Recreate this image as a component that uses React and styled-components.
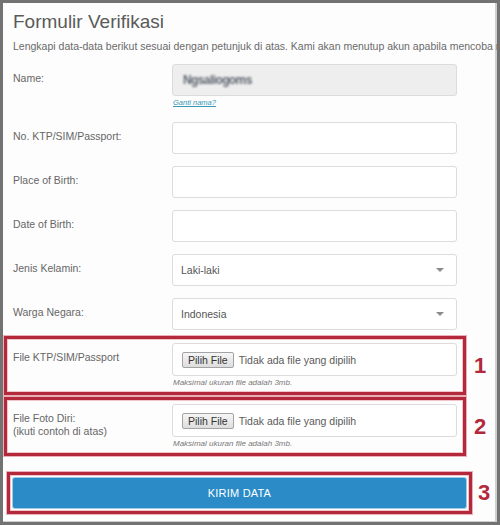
import React from "react";
import styled, { createGlobalStyle } from "styled-components";

const Global = createGlobalStyle`
  html, body { margin: 0; padding: 0; background: #fff; }
  * { box-sizing: border-box; }
`;

const RED = "#b3283b";

const Frame = styled.div`
  width: 500px;
  height: 525px;
  border: 3px solid #727272;
  background: #fdfdfd;
  overflow: hidden;
  font-family: "Liberation Sans", Arial, sans-serif;
  color: #555;
  box-shadow: inset -2px -1px 0 #cfcfcf;
`;

const Title = styled.h1`
  margin: 7px 0 0 10px;
  font-size: 19px;
  line-height: 24px;
  font-weight: 400;
  color: #5a5a5a;
`;

const Subtitle = styled.p`
  margin: 5px 0 0 10px;
  font-size: 10.5px;
  line-height: 14px;
  white-space: nowrap;
  color: #6a6a6a;
`;

const Row = styled.div`
  display: flex;
  align-items: flex-start;
  padding-left: 10px;
  margin-top: ${(p) => p.$mt ?? 12}px;
`;

const Label = styled.div`
  width: 159px;
  flex: none;
  padding-top: 8px;
  font-size: 10.5px;
  line-height: 13px;
  color: #666;
`;

const Field = styled.div`
  width: 285px;
  flex: none;
  display: flex;
  flex-direction: column;
`;

const Control = styled.div`
  height: ${(p) => p.$h ?? 32}px;
  border: 1px solid #dcdcdc;
  border-radius: 3px;
  background: ${(p) => (p.$disabled ? "#eeeeee" : "#fff")};
  display: flex;
  align-items: center;
  justify-content: space-between;
  padding: 0 12px 0 8px;
  font-size: 10.5px;
  color: #555;
`;

const Blurred = styled.span`
  font-weight: 700;
  font-size: 12px;
  color: #5f6670;
  letter-spacing: -0.6px;
  filter: blur(1px);
  margin-left: 2px;
`;

const Caret = styled.span`
  width: 0;
  height: 0;
  border-left: 4px solid transparent;
  border-right: 4px solid transparent;
  border-top: 4px solid #8a8a8a;
`;

const Link = styled.a`
  margin: 1px 0 0 1px;
  font-size: 7.5px;
  line-height: 11px;
  font-style: italic;
  color: #3a98b9;
  text-decoration: underline;
`;

const Help = styled.div`
  margin: 2px 0 0 1px;
  font-size: 8px;
  line-height: 10px;
  font-style: italic;
  color: #777;
`;

const Annot = styled.div`
  display: flex;
  align-items: center;
  margin-top: ${(p) => p.$mt}px;
  margin-left: ${(p) => p.$ml}px;
`;

const RedBox = styled.div`
  width: ${(p) => p.$w}px;
  border: 3px solid ${RED};
  box-shadow: 0 0 0 1px #eab0b8, inset 0 0 0 1px #f1c4ca;
  padding: ${(p) => p.$pad};
  display: flex;
  align-items: flex-start;
`;

const Num = styled.span`
  margin-left: ${(p) => p.$ml}px;
  font-size: 22px;
  line-height: 24px;
  font-weight: 700;
  color: ${RED};
`;

const FileButton = styled.span`
  height: 16px;
  padding: 0 5px;
  display: inline-flex;
  align-items: center;
  border: 1px solid #a3a3a3;
  border-radius: 2px;
  background: linear-gradient(#f6f6f6, #dddddd);
  font-size: 10.5px;
  color: #333;
`;

const FileText = styled.span`
  margin-left: 5px;
  font-size: 10.5px;
  color: #5a5a5a;
`;

const FileControl = styled(Control)`
  justify-content: flex-start;
  padding-left: 9px;
`;

const Submit = styled.button`
  width: 453px;
  height: 30px;
  border: none;
  border-radius: 2px;
  background: #2a8bc7;
  box-shadow: 0 0 0 1px #9fcbe6;
  color: #fff;
  font-family: "Liberation Sans", Arial, sans-serif;
  font-size: 11px;
  letter-spacing: 0.2px;
  text-transform: uppercase;
`;

const FileRow = ({ label }) => (
  <>
    <Label>{label}</Label>
    <Field>
      <FileControl $h={33}>
        <FileButton>Pilih File</FileButton>
        <FileText>Tidak ada file yang dipilih</FileText>
      </FileControl>
      <Help>Maksimal ukuran file adalah 3mb.</Help>
    </Field>
  </>
);

export default function App() {
  return (
    <>
      <Global />
      <Frame>
        <Title>Formulir Verifikasi</Title>
        <Subtitle>
          Lengkapi data-data berikut sesuai dengan petunjuk di atas. Kami akan menutup akun apabila mencoba memalsukan data.
        </Subtitle>

        <Row $mt={11}>
          <Label>Name:</Label>
          <Field>
            <Control $disabled>
              <Blurred>Ngsaliogoms</Blurred>
            </Control>
            <Link>Ganti nama?</Link>
          </Field>
        </Row>

        <Row $mt={14}>
          <Label>No. KTP/SIM/Passport:</Label>
          <Field>
            <Control />
          </Field>
        </Row>
        <Row>
          <Label>Place of Birth:</Label>
          <Field>
            <Control />
          </Field>
        </Row>
        <Row>
          <Label>Date of Birth:</Label>
          <Field>
            <Control />
          </Field>
        </Row>
        <Row>
          <Label>Jenis Kelamin:</Label>
          <Field>
            <Control>
              Laki-laki
              <Caret />
            </Control>
          </Field>
        </Row>
        <Row>
          <Label>Warga Negara:</Label>
          <Field>
            <Control>
              Indonesia
              <Caret />
            </Control>
          </Field>
        </Row>

        <Annot $mt={6} $ml={1}>
          <RedBox $w={462} $pad="4px 6px 4px 6px">
            <FileRow label="File KTP/SIM/Passport" />
          </RedBox>
          <Num $ml={8}>1</Num>
        </Annot>

        <Annot $mt={2} $ml={1}>
          <RedBox $w={462} $pad="4px 6px 4px 6px">
            <FileRow
              label={
                <>
                  File Foto Diri:
                  <br />
                  (ikuti contoh di atas)
                </>
              }
            />
          </RedBox>
          <Num $ml={8}>2</Num>
        </Annot>

        <Annot $mt={16} $ml={4}>
          <RedBox $w={465} $pad="3px">
            <Submit>Kirim Data</Submit>
          </RedBox>
          <Num $ml={6}>3</Num>
        </Annot>
      </Frame>
    </>
  );
}
